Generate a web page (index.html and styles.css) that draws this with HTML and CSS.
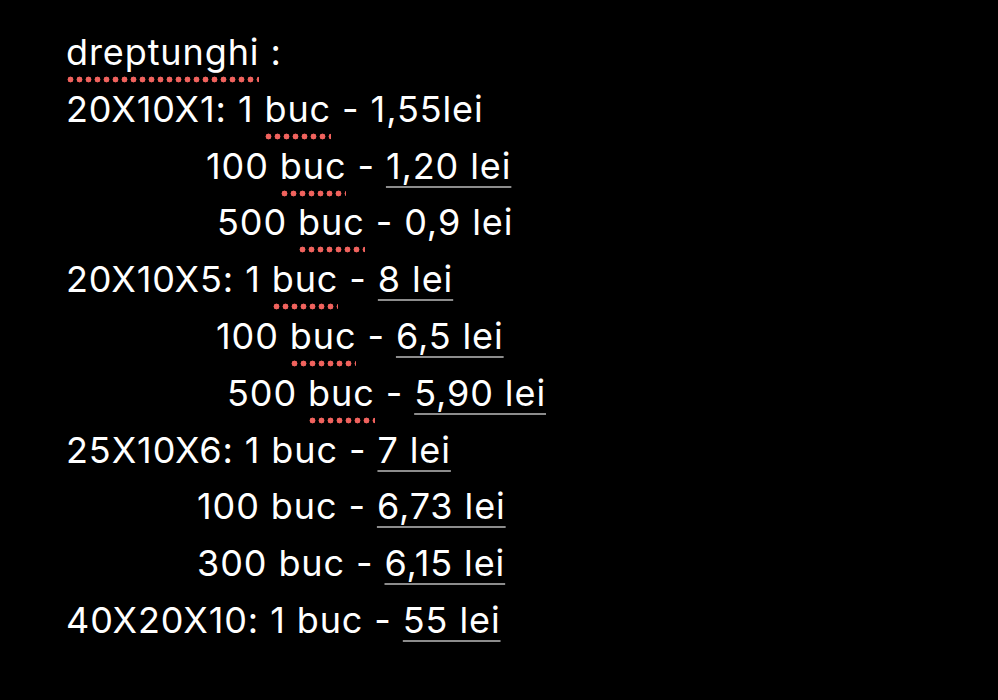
FILE: index.html
```html
<!DOCTYPE html>
<html lang="ro">
<head>
<meta charset="utf-8">
<title>dreptunghi</title>
<link rel="stylesheet" href="styles.css">
</head>
<body>
<div class="note">
  <p class="line"><span class="spell">dreptunghi</span> :</p>
  <p class="line">20X10X1: 1 <span class="spell">buc</span> - 1,55lei</p>
  <p class="line ind-1">100 <span class="spell">buc</span> - <span class="link">1,20 lei</span></p>
  <p class="line ind-2">500 <span class="spell">buc</span> - 0,9 lei</p>
  <p class="line">20X10X5: 1 <span class="spell">buc</span> - <span class="link">8 lei</span></p>
  <p class="line ind-3">100 <span class="spell">buc</span> - <span class="link">6,5 lei</span></p>
  <p class="line ind-4">500 <span class="spell">buc</span> - <span class="link">5,90 lei</span></p>
  <p class="line">25X10X6: 1 buc - <span class="link">7 lei</span></p>
  <p class="line ind-5">100 buc - <span class="link">6,73 lei</span></p>
  <p class="line ind-5">300 buc - <span class="link">6,15 lei</span></p>
  <p class="line">40X20X10: 1 buc - <span class="link">55 lei</span></p>
</div>
</body>
</html>
```
FILE: styles.css
```css
html, body {
  margin: 0;
  padding: 0;
  background: #000;
}
body {
  width: 998px;
  height: 700px;
  overflow: hidden;
}
.note {
  padding: 24px 0 0 66px;
  font-family: Inter, "Noto Sans", sans-serif;
  font-size: 36px;
  letter-spacing: 0.9px;
  line-height: 56.8px;
  color: #fff;
}
.line {
  margin: 0;
  white-space: nowrap;
}
.ind-1 { padding-left: 140px; }
.ind-2 { padding-left: 151px; }
.ind-3 { padding-left: 150px; }
.ind-4 { padding-left: 161px; }
.ind-5 { padding-left: 131px; }
.spell {
  position: relative;
}
.spell::after {
  content: "";
  position: absolute;
  left: 1px;
  right: 0;
  bottom: -9px;
  height: 7px;
  background: radial-gradient(circle at 3.5px 3.5px, #f0625d 2.7px, transparent 3.2px) 0 0 / 9px 7px repeat-x;
}
.link {
  text-decoration: underline;
  text-decoration-color: #8c8c8c;
  text-decoration-thickness: 2px;
  text-underline-offset: 7px;
}
```
